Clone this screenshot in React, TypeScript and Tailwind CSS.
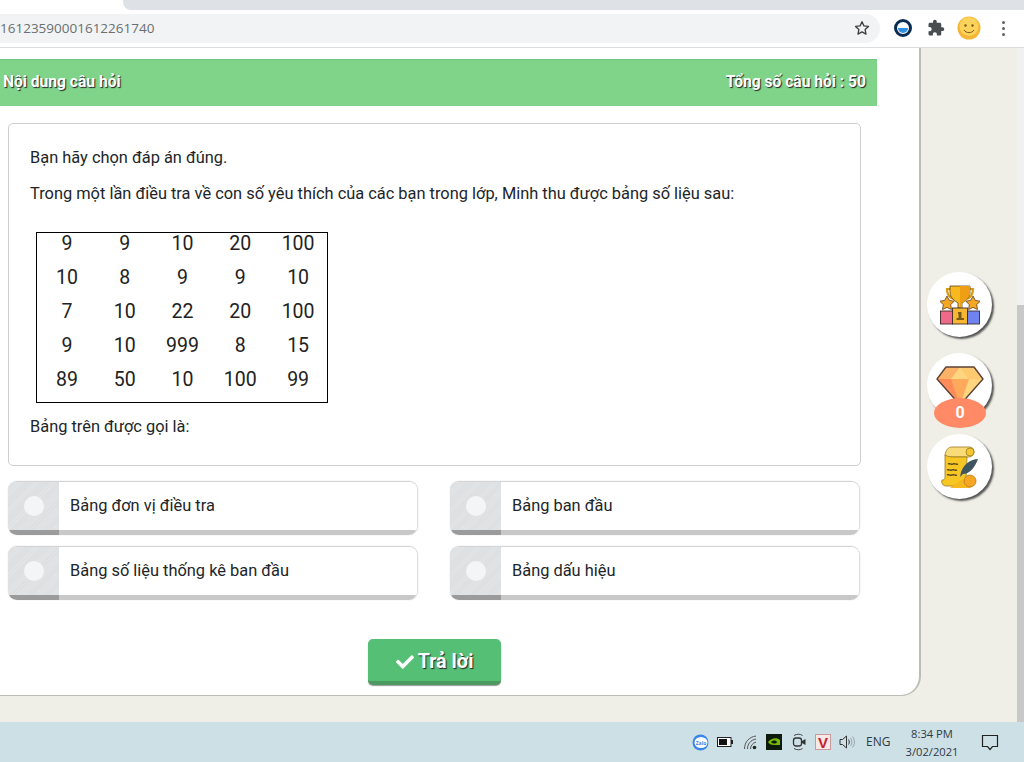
import { FaCheck } from "react-icons/fa";

const table = [
  ["9", "9", "10", "20", "100"],
  ["10", "8", "9", "9", "10"],
  ["7", "10", "22", "20", "100"],
  ["9", "10", "999", "8", "15"],
  ["89", "50", "10", "100", "99"],
];

const answers = [
  "Bảng đơn vị điều tra",
  "Bảng ban đầu",
  "Bảng số liệu thống kê ban đầu",
  "Bảng dấu hiệu",
];

const Answer = ({ text }: { text: string }) => (
  <div className="flex h-[54px] overflow-hidden rounded-[9px] border-t border-t-[#d4d4d4] border-r border-r-[#dedede] shadow-[0_0_1px_#bbb]">
    <div className="flex w-[51px] shrink-0 items-center justify-center border-b-[5px] border-b-[#9b9b9b] bg-[repeating-linear-gradient(135deg,#dcdfe1_0,#dcdfe1_1px,#e2e4e6_1px,#e2e4e6_2px)]">
      <div className="size-[20px] rounded-full bg-[#f4f5f6]" />
    </div>
    <div className="flex flex-1 items-center border-b-[5px] border-b-[#c8c8c8] bg-white pl-[11px] text-[16.400px] text-[#212529]">
      {text}
    </div>
  </div>
);

const Trophy = () => (
  <svg width="40" height="40" viewBox="0 0 40 40">
    <path d="M11 4H7c0 6 3 9 7 10M29 4h4c0 6-3 9-7 10" fill="none" stroke="#d9980f" strokeWidth="2.200" />
    <path d="M10 1h20v6c0 6-5 9-8 11v5h-4v-5c-3-2-8-5-8-11z" fill="#f8b91f" stroke="#5a4020" strokeWidth=".8" />
    <path d="M20 1h10v6c0 6-5 9-8 11v5h-2z" fill="#ee9f14" />
    <path d="M7 11l2.300 4.400 4.900.8-3.500 3.500.8 4.900L7 22.400l-4.500 2.200.8-4.900-3.500-3.500 4.900-.8z" fill="#f5a623" stroke="#5a4020" strokeWidth=".8" />
    <path d="M33 11l2.300 4.400 4.900.8-3.500 3.500.8 4.900-4.500-2.200-4.500 2.200.8-4.900-3.500-3.500 4.900-.8z" fill="#f5a623" stroke="#5a4020" strokeWidth=".8" />
    <rect x=".5" y="26" width="12" height="13" fill="#ee6a88" stroke="#3d2a2a" strokeWidth=".9" />
    <rect x="12.500" y="23" width="15" height="16" fill="#f7b731" stroke="#3d2a2a" strokeWidth=".9" />
    <rect x="27.500" y="26" width="12" height="13" fill="#6f83f0" stroke="#3d2a2a" strokeWidth=".9" />
    <path d="M18 27h3.500v6H24v2h-7.500v-2H18.500v-4H18z" fill="#7a5a1a" />
  </svg>
);

const Diamond = () => (
  <svg width="48" height="40" viewBox="0 0 48 40">
    <path d="M10 1h28l9 12-23 26L1 13z" fill="#ffa95c" />
    <path d="M10 1h14l-9 12H1z" fill="#fdb268" />
    <path d="M24 1h14l9 12H33z" fill="#fec96f" />
    <path d="M24 1l9 12H15z" fill="#ffd67f" />
    <path d="M33 13h14L24 39z" fill="#ffd67f" />
    <path d="M1 13h14l9 26z" fill="#ff8c58" />
    <path d="M10 1h28l9 12-23 26L1 13z" fill="none" stroke="#5c4238" strokeWidth="1.400" strokeLinejoin="round" />
  </svg>
);

const Scroll = () => (
  <svg width="38" height="42" viewBox="0 0 38 42">
    <path d="M4 9c1-5 3-8 7-8h18c3 0 4 3 4 5s-2 5-5 5H5z" fill="#f9dc7a" stroke="#9c7a20" strokeWidth=".8" />
    <circle cx="29" cy="6" r="4" fill="#f6c82f" stroke="#9c7a20" strokeWidth=".8" />
    <path d="M4 9c3 2 7 2 9 2h13l-1 22c0 3 2 6 4 7H5c-3 0-5-3-4-6 3 0 3-2 3-4z" fill="#f6c625" stroke="#9c7a20" strokeWidth=".8" />
    <path d="M20 34h9a7 5 0 0 1 0 8H9z" fill="#f5b81f" />
    <circle cx="29" cy="35" r="6" fill="#f6a623" stroke="#b07a1c" strokeWidth=".8" />
    <path d="M7 18c2-1 3 1 5 0s3 1 5 0M6 24c2-1 3 1 5 0s3 1 5 0M6 29c2-1 3 1 5 0s3 1 5 0" stroke="#4a3c1a" strokeWidth="1.300" fill="none" />
    <path d="M37 13c-7 0-14 5-17 13l-1 5 3-3c7 0 12-7 15-15z" fill="#3f5660" />
  </svg>
);

const Emoji = () => (
  <svg width="24" height="24" viewBox="0 0 24 24">
    <circle cx="12" cy="12" r="11.500" fill="#f5b637" />
    <circle cx="12" cy="10.500" r="9.500" fill="#fbd25a" />
    <circle cx="8.500" cy="9.500" r="1.200" fill="#7a5a1a" />
    <circle cx="15.500" cy="9.500" r="1.200" fill="#7a5a1a" />
    <path d="M7 14c2 3.500 8 3.500 10 0" fill="none" stroke="#7a5a1a" strokeWidth="1" />
  </svg>
);

const Tray = () => (
  <div className="flex h-10 items-center justify-end bg-[#cde0e6] font-['Open_Sans',sans-serif] text-[#2f3a44]">
    <svg width="17" height="17" viewBox="0 0 17 17" className="mr-[8px]">
      <circle cx="8.500" cy="8.500" r="8" fill="#3a86e8" />
      <ellipse cx="9" cy="8.500" rx="6.500" ry="5.500" fill="#fff" />
      <text x="9" y="10.500" textAnchor="middle" fontSize="5" fontFamily="Open Sans" fontWeight="700" fill="#3a86e8">Zalo</text>
    </svg>
    <svg width="16" height="12" viewBox="0 0 16 12" className="mr-[11px]">
      <rect x=".5" y="1.500" width="13.500" height="9" fill="#fff" stroke="#222" />
      <rect x="2" y="3" width="8" height="6" fill="#111" />
      <rect x="14" y="4" width="2" height="4" fill="#222" />
    </svg>
    <svg width="13" height="15" viewBox="0 0 13 15" className="mr-[9px]">
      <path d="M.5 14C.5 7 5 2 12 1M3.500 14c0-5 3-9 8.500-10M6.500 14c0-3 2-6 5.500-7" fill="none" stroke="#555" strokeWidth="1" />
      <circle cx="10.500" cy="12.500" r="1.800" fill="#222" />
    </svg>
    <svg width="16" height="16" viewBox="0 0 16 16" className="mr-[10px]">
      <rect width="16" height="16" fill="#0d1a0c" />
      <path d="M2 8c3-4 9-5 12-2v5H8c-3 0-5-1-6-3z" fill="#76b900" />
      <path d="M5 8c2-2 5-2 6 0-1 2-4 2-6 0z" fill="#0d1a0c" />
    </svg>
    <svg width="14" height="18" viewBox="0 0 14 18" className="mr-[9px]">
      <path d="M2 2.500C5 .8 8 .8 10.500 2.500M2 15.500c3 1.700 6 1.700 8.500 0" fill="none" stroke="#444" />
      <rect x="1.500" y="5" width="8" height="8" rx="2.500" fill="none" stroke="#333" strokeWidth="1.300" />
      <path d="M10 8l3.500-2v6L10 10z" fill="#333" />
    </svg>
    <div className="mr-[8px] flex size-[16px] items-center justify-center border border-[#c89a9a] bg-[#f8e8e8] font-['Liberation_Sans',sans-serif] text-[15px] leading-none font-bold text-[#c8202a]">
      V
    </div>
    <svg width="17" height="14" viewBox="0 0 17 14" className="mr-[10px]">
      <path d="M1 4.500h2.500L7.500 1v12l-4-3.500H1z" fill="none" stroke="#333" />
      <path d="M9.500 4.500c1 1.500 1 3.500 0 5" fill="none" stroke="#333" />
      <path d="M11.500 3c1.800 2.500 1.800 5.500 0 8M13.500 1.500c2.500 3 2.500 8 0 11" fill="none" stroke="#9aa5aa" />
    </svg>
    <div className="mr-[15px] w-[24px] text-[12px] whitespace-nowrap">ENG</div>
    <div className="mr-[22px] flex w-[54px] flex-col items-center pt-[1px] text-[11.200px] leading-[18px] whitespace-nowrap">
      <span>8:34 PM</span>
      <span>3/02/2021</span>
    </div>
    <svg width="18" height="17" viewBox="0 0 18 17" className="mr-[25px]">
      <path d="M1.500 1.500h15v11h-5l-2.500 3-2.500-3h-5z" fill="none" stroke="#222" strokeWidth="1.200" />
    </svg>
  </div>
);

export default function App() {
  return (
    <div className="flex h-[762px] w-[1024px] flex-col overflow-hidden bg-[#efefe7] font-['Roboto',sans-serif]">
      <div className="flex h-[10px] bg-white">
        <div className="ml-[123px] flex-1 rounded-bl-[8px] bg-[#dee1e6]" />
      </div>
      <div className="flex h-[38px] items-center border-b border-b-[#dadce0] bg-white pb-[1px]">
        <div className="flex h-[29px] w-[880px] items-center justify-between rounded-r-[15px] bg-[#f1f3f4] pr-[10px]">
          <span className="font-['Open_Sans',sans-serif] text-[13.500px] text-[#6b6f72]">16123590001612261740</span>
          <svg width="16" height="16" viewBox="0 0 24 24" fill="none" stroke="#3c4043" strokeWidth="2" strokeLinejoin="round">
            <path d="M12 2.500l2.900 6.300 6.800.8-5 4.700 1.300 6.800-6-3.400-6 3.400 1.300-6.800-5-4.700 6.800-.8z" />
          </svg>
        </div>
        <div className="ml-[14px] flex size-[18px] items-center justify-center rounded-full border-[3px] border-[#0b2c52] bg-white">
          <div className="mt-[4px] h-[5px] w-[10px] rounded-b-full bg-[#2f8fe0]" />
        </div>
        <svg width="18" height="18" viewBox="0 0 24 24" fill="#4a4d50" className="ml-[15px]">
          <path d="M20.500 11H19V7c0-1.100-.9-2-2-2h-4V3.500C13 2.120 11.880 1 10.500 1S8 2.120 8 3.500V5H4c-1.100 0-1.990.9-1.990 2v3.800H3.500c1.490 0 2.700 1.210 2.700 2.700s-1.210 2.700-2.700 2.700H2V20c0 1.100.9 2 2 2h3.800v-1.500c0-1.490 1.210-2.700 2.700-2.700 1.490 0 2.700 1.210 2.700 2.700V22H17c1.100 0 2-.9 2-2v-4h1.500c1.380 0 2.500-1.120 2.500-2.500S21.880 11 20.500 11z" />
        </svg>
        <div className="ml-[12px] flex"><Emoji /></div>
        <div className="ml-[21px] flex flex-col gap-[3px]">
          <div className="size-[3px] rounded-full bg-[#5f6368]" />
          <div className="size-[3px] rounded-full bg-[#5f6368]" />
          <div className="size-[3px] rounded-full bg-[#5f6368]" />
        </div>
      </div>

      <div className="flex flex-1">
        <main className="flex h-[648px] w-[921px] shrink-0 flex-col rounded-br-[20px] border-r-[2px] border-b border-r-[#bdbdb8] border-b-[#bdbdb8] bg-white pt-[11px]">
          <div className="flex h-[47px] w-[877px] items-center justify-between border-t border-[#74c47f] bg-[#7fd48a] pr-[11px] pl-[3px] text-[15.600px] font-bold text-white [text-shadow:1px_1px_1px_#222]">
            <span>Nội dung câu hỏi</span>
            <span>Tổng số câu hỏi : 50</span>
          </div>

          <div className="mt-[17px] ml-[8px] h-[343px] w-[853px] rounded-[5px] border border-[#cfcfcf] pt-[24px] pl-[21px] text-[16.400px] leading-[20px] text-[#212529]">
            <p>Bạn hãy chọn đáp án đúng.</p>
            <p className="mt-[16px]">Trong một lần điều tra về con số yêu thích của các bạn trong lớp, Minh thu được bảng số liệu sau:</p>
            <div className="mt-[28px] ml-[6px] flex w-[292px] flex-col gap-[14px] border border-black pb-[13px] text-[19.500px] text-[#222]">
              {table.map((row, i) => (
                <div key={i} className="grid h-[20px] grid-cols-5 pl-[1px] text-center leading-[22px]">
                  {row.map((n, j) => (
                    <span key={j}>{n}</span>
                  ))}
                </div>
              ))}
            </div>
            <p className="mt-[14px]">Bảng trên được gọi là:</p>
          </div>

          <div className="mt-[15px] ml-[8px] grid w-[852px] grid-cols-[410px_410px] justify-between gap-y-[11px]">
            {answers.map((a) => (
              <Answer key={a} text={a} />
            ))}
          </div>

          <div className="mt-[39px] ml-[368px] flex">
            <button className="flex h-[46px] w-[133px] items-center justify-center gap-[4px] rounded-[5px] border-b-[4px] border-b-[#4c9a60] bg-[#55bf75] pt-[4px] text-[19.700px] font-bold text-white shadow-[0_1px_1px_#999] [text-shadow:1px_1px_1px_#222]">
              <FaCheck className="size-[18px]" />
              Trả lời
            </button>
          </div>
        </main>

        <aside className="flex w-[96px] flex-col items-center gap-[16px] pt-[224px] pr-[19px]">
          <div className="flex size-[65px] items-center justify-center rounded-full bg-white shadow-[2px_2px_2px_#555]">
            <Trophy />
          </div>
          <div className="relative flex size-[65px] items-start justify-center rounded-full bg-white pt-[13px] shadow-[2px_2px_2px_#555]">
            <Diamond />
            <div className="absolute top-[45px] left-[7px] flex h-[30px] w-[52px] items-center justify-center rounded-[50%] bg-[#ff8a65] text-[16px] font-bold text-white">0</div>
          </div>
          <div className="flex size-[65px] items-center justify-center rounded-full bg-white shadow-[2px_2px_2px_#555]">
            <Scroll />
          </div>
        </aside>

        <div className="flex w-[7px] flex-col bg-[#f1f1f1] pt-[257px]">
          <div className="flex-1 bg-[#c8c8c8]" />
        </div>
      </div>

      <Tray />
    </div>
  );
}
